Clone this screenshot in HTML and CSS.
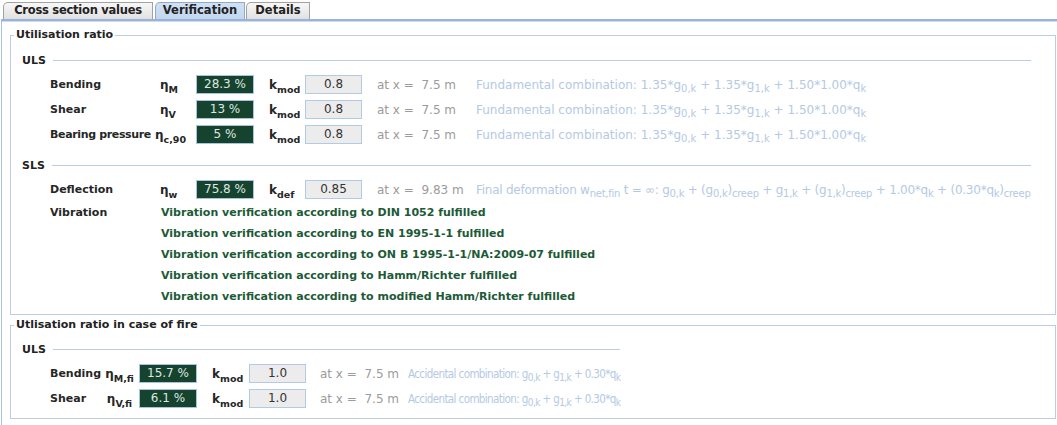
FILE: index.html
```html
<!DOCTYPE html>
<html>
<head>
<meta charset="utf-8">
<link rel="stylesheet" href="styles.css">
</head>
<body>
<div class="tabs">
  <div class="tab t1">Cross section values</div>
  <div class="tab t2 active">Verification</div>
  <div class="tab t3">Details</div>
</div>
<div class="panel">
  <fieldset class="group g1">
    <legend>Utilisation ratio</legend>
    <div class="sub s1">
      <div class="hdr"><span>ULS</span></div>
      <div class="row">
        <span class="lbl">Bending</span>
        <span class="sym">η<sub>M</sub></span>
        <span class="val">28.3 %</span>
        <span class="kk">k<sub>mod</sub></span>
        <span class="inp">0.8</span>
        <span class="pos">at x =&nbsp; 7.5 m</span>
        <span class="frm">Fundamental combination: 1.35*g<sub>0,k</sub> + 1.35*g<sub>1,k</sub> + 1.50*1.00*q<sub>k</sub></span>
      </div>
      <div class="row">
        <span class="lbl">Shear</span>
        <span class="sym">η<sub>V</sub></span>
        <span class="val">13 %</span>
        <span class="kk">k<sub>mod</sub></span>
        <span class="inp">0.8</span>
        <span class="pos">at x =&nbsp; 7.5 m</span>
        <span class="frm">Fundamental combination: 1.35*g<sub>0,k</sub> + 1.35*g<sub>1,k</sub> + 1.50*1.00*q<sub>k</sub></span>
      </div>
      <div class="row">
        <span class="lbl lbl-long">Bearing pressure</span>
        <span class="sym wide">η<sub>c,90</sub></span>
        <span class="val">5 %</span>
        <span class="kk">k<sub>mod</sub></span>
        <span class="inp">0.8</span>
        <span class="pos">at x =&nbsp; 7.5 m</span>
        <span class="frm">Fundamental combination: 1.35*g<sub>0,k</sub> + 1.35*g<sub>1,k</sub> + 1.50*1.00*q<sub>k</sub></span>
      </div>
      <div class="hdr hdr-sls"><span>SLS</span></div>
      <div class="row">
        <span class="lbl">Deflection</span>
        <span class="sym">η<sub>w</sub></span>
        <span class="val">75.8 %</span>
        <span class="kk">k<sub>def</sub></span>
        <span class="inp">0.85</span>
        <span class="pos">at x =&nbsp; 9.83 m</span>
        <span class="frm frm-tight">Final deformation w<sub>net,fin</sub> t = ∞: g<sub>0,k</sub> + (g<sub>0,k</sub>)<sub>creep</sub> + g<sub>1,k</sub> + (g<sub>1,k</sub>)<sub>creep</sub> + 1.00*q<sub>k</sub> + (0.30*q<sub>k</sub>)<sub>creep</sub></span>
      </div>
      <div class="vrow">
        <span class="lbl">Vibration</span>
        <span class="ok">Vibration verification according to DIN 1052 fulfilled</span>
      </div>
      <div class="vrow">
        <span class="lbl"></span>
        <span class="ok">Vibration verification according to EN 1995-1-1 fulfilled</span>
      </div>
      <div class="vrow">
        <span class="lbl"></span>
        <span class="ok">Vibration verification according to ON B 1995-1-1/NA:2009-07 fulfilled</span>
      </div>
      <div class="vrow">
        <span class="lbl"></span>
        <span class="ok">Vibration verification according to Hamm/Richter fulfilled</span>
      </div>
      <div class="vrow">
        <span class="lbl"></span>
        <span class="ok">Vibration verification according to modified Hamm/Richter fulfilled</span>
      </div>
    </div>
  </fieldset>

  <fieldset class="group g2">
    <legend>Utlisation ratio in case of fire</legend>
    <div class="sub s2">
      <div class="hdr"><span>ULS</span></div>
      <div class="row">
        <span class="lbl">Bending</span>
        <span class="sym">η<sub>M,fi</sub></span>
        <span class="val">15.7 %</span>
        <span class="kk">k<sub>mod</sub></span>
        <span class="inp">1.0</span>
        <span class="pos">at x =&nbsp; 7.5 m</span>
        <span class="frm frm-narrow">Accidental combination: g<sub>0,k</sub> + g<sub>1,k</sub> + 0.30*q<sub>k</sub></span>
      </div>
      <div class="row">
        <span class="lbl">Shear</span>
        <span class="sym">η<sub>V,fi</sub></span>
        <span class="val">6.1 %</span>
        <span class="kk">k<sub>mod</sub></span>
        <span class="inp">1.0</span>
        <span class="pos">at x =&nbsp; 7.5 m</span>
        <span class="frm frm-narrow">Accidental combination: g<sub>0,k</sub> + g<sub>1,k</sub> + 0.30*q<sub>k</sub></span>
      </div>
    </div>
  </fieldset>
</div>
</body>
</html>
```

FILE: styles.css
```css
html, body {
  margin: 0;
  padding: 0;
  background: #ffffff;
  overflow: hidden;
}

body {
  font-family: "DejaVu Sans", "Liberation Sans", sans-serif;
  font-size: 12px;
  color: #222;
  width: 1057px;
  height: 425px;
}

/* ---------- tabs ---------- */
.tabs {
  display: flex;
  align-items: flex-end;
  height: 19px;
}

.tab {
  box-sizing: border-box;
  height: 17px;
  border: 1px solid #a2a2a2;
  border-bottom: none;
  border-top-left-radius: 5px;
  background: linear-gradient(#f7f7f7, #e1e1e1);
  font-weight: bold;
  font-size: 11.5px;
  line-height: 15px;
  text-align: center;
  color: #222;
}

.t1 { margin-left: 3px; width: 150px; letter-spacing: -0.25px; }
.t2 { margin-left: 2px; width: 90px; }
.t3 { margin-left: 1px; width: 64px; }

.tab.active {
  background: linear-gradient(#cfe1f4, #c2d7ef);
  border-color: #93a9cc;
}

/* ---------- panel ---------- */
.panel {
  box-sizing: border-box;
  margin-left: 1px;
  width: 1063px;
  height: 406px;
  border-top: 2px solid #9ab1d8;
  border-left: 1px solid #a9c0e1;
  box-shadow: inset 0 1px 0 #cddcef;
  padding: 6px 8px 0 8px;
}

/* ---------- group boxes ---------- */
.group {
  margin: 0;
  min-width: 0;
  border: 1px solid #bacde5;
  padding: 9px 10px 7px 11px;
}

.group legend {
  margin-left: -8px;
  padding: 0 2px;
  font-weight: bold;
  font-size: 11px;
  line-height: 16px;
  color: #222;
}

.g2 {
  margin-top: 2px;
  padding-top: 8px;
}

.sub {
  width: max-content;
}

.hdr {
  display: flex;
  align-items: center;
  height: 16px;
  font-weight: bold;
  font-size: 11px;
  color: #222;
  margin-bottom: 4px;
}

.hdr::after {
  content: "";
  flex: 1;
  margin-left: 7px;
  border-top: 1px solid #bacde5;
}

.hdr-sls {
  margin-top: 10px;
}

/* ---------- rows ---------- */
.row {
  display: grid;
  align-items: center;
  height: 25px;
  margin-left: 28px;
  white-space: nowrap;
}

.s1 .row {
  grid-template-columns: 105px 41px 58px 51px 57px 114px auto;
}

.s2 .row {
  grid-template-columns: 50px 39px 58px 52px 57px 102px auto;
}

.lbl {
  font-weight: bold;
  font-size: 11px;
  color: #262626;
}

.lbl-long {
  letter-spacing: -0.35px;
}

.sym {
  font-weight: bold;
  font-size: 12px;
  color: #262626;
  padding-left: 5px;
  padding-top: 1px;
}

.sym.wide {
  padding-left: 0;
}

.s2 .sym {
  padding-left: 0;
  text-align: center;
}

.kk {
  font-weight: bold;
  font-size: 12px;
  color: #262626;
  padding-left: 15px;
  padding-top: 1px;
}

sub {
  font-size: 9.5px;
  line-height: 0;
  vertical-align: -4px;
}

.sym sub, .kk sub {
  font-weight: bold;
}

.val {
  box-sizing: border-box;
  height: 19px;
  border: 1px solid #a7c3e0;
  background: #15432d;
  color: #dfe6e2;
  text-align: center;
  line-height: 17px;
  font-size: 12px;
}

.inp {
  box-sizing: border-box;
  height: 19px;
  border: 1px solid #b3cae4;
  background: #ececec;
  color: #333;
  text-align: center;
  line-height: 17px;
  font-size: 12px;
}

.pos {
  padding-left: 15px;
  color: #9b9b9b;
  font-size: 12px;
}

.s2 .pos {
  padding-left: 14px;
}

.frm {
  color: #b5c9e3;
  font-size: 12px;
}

.frm sub {
  font-size: 10px;
  vertical-align: -3px;
}

.frm-tight {
  letter-spacing: -0.25px;
}

.frm-narrow {
  font-family: "Liberation Sans Narrow", "DejaVu Sans Condensed", "Liberation Sans", sans-serif;
  font-stretch: condensed;
  font-size: 11.5px;
  letter-spacing: -0.6px;
}

.frm-narrow sub {
  font-size: 10px;
}

.vrow {
  display: grid;
  grid-template-columns: 111px auto;
  align-items: center;
  height: 21px;
  margin-left: 28px;
  white-space: nowrap;
}

.ok {
  font-weight: bold;
  font-size: 11px;
  color: #1d5a37;
}
```
